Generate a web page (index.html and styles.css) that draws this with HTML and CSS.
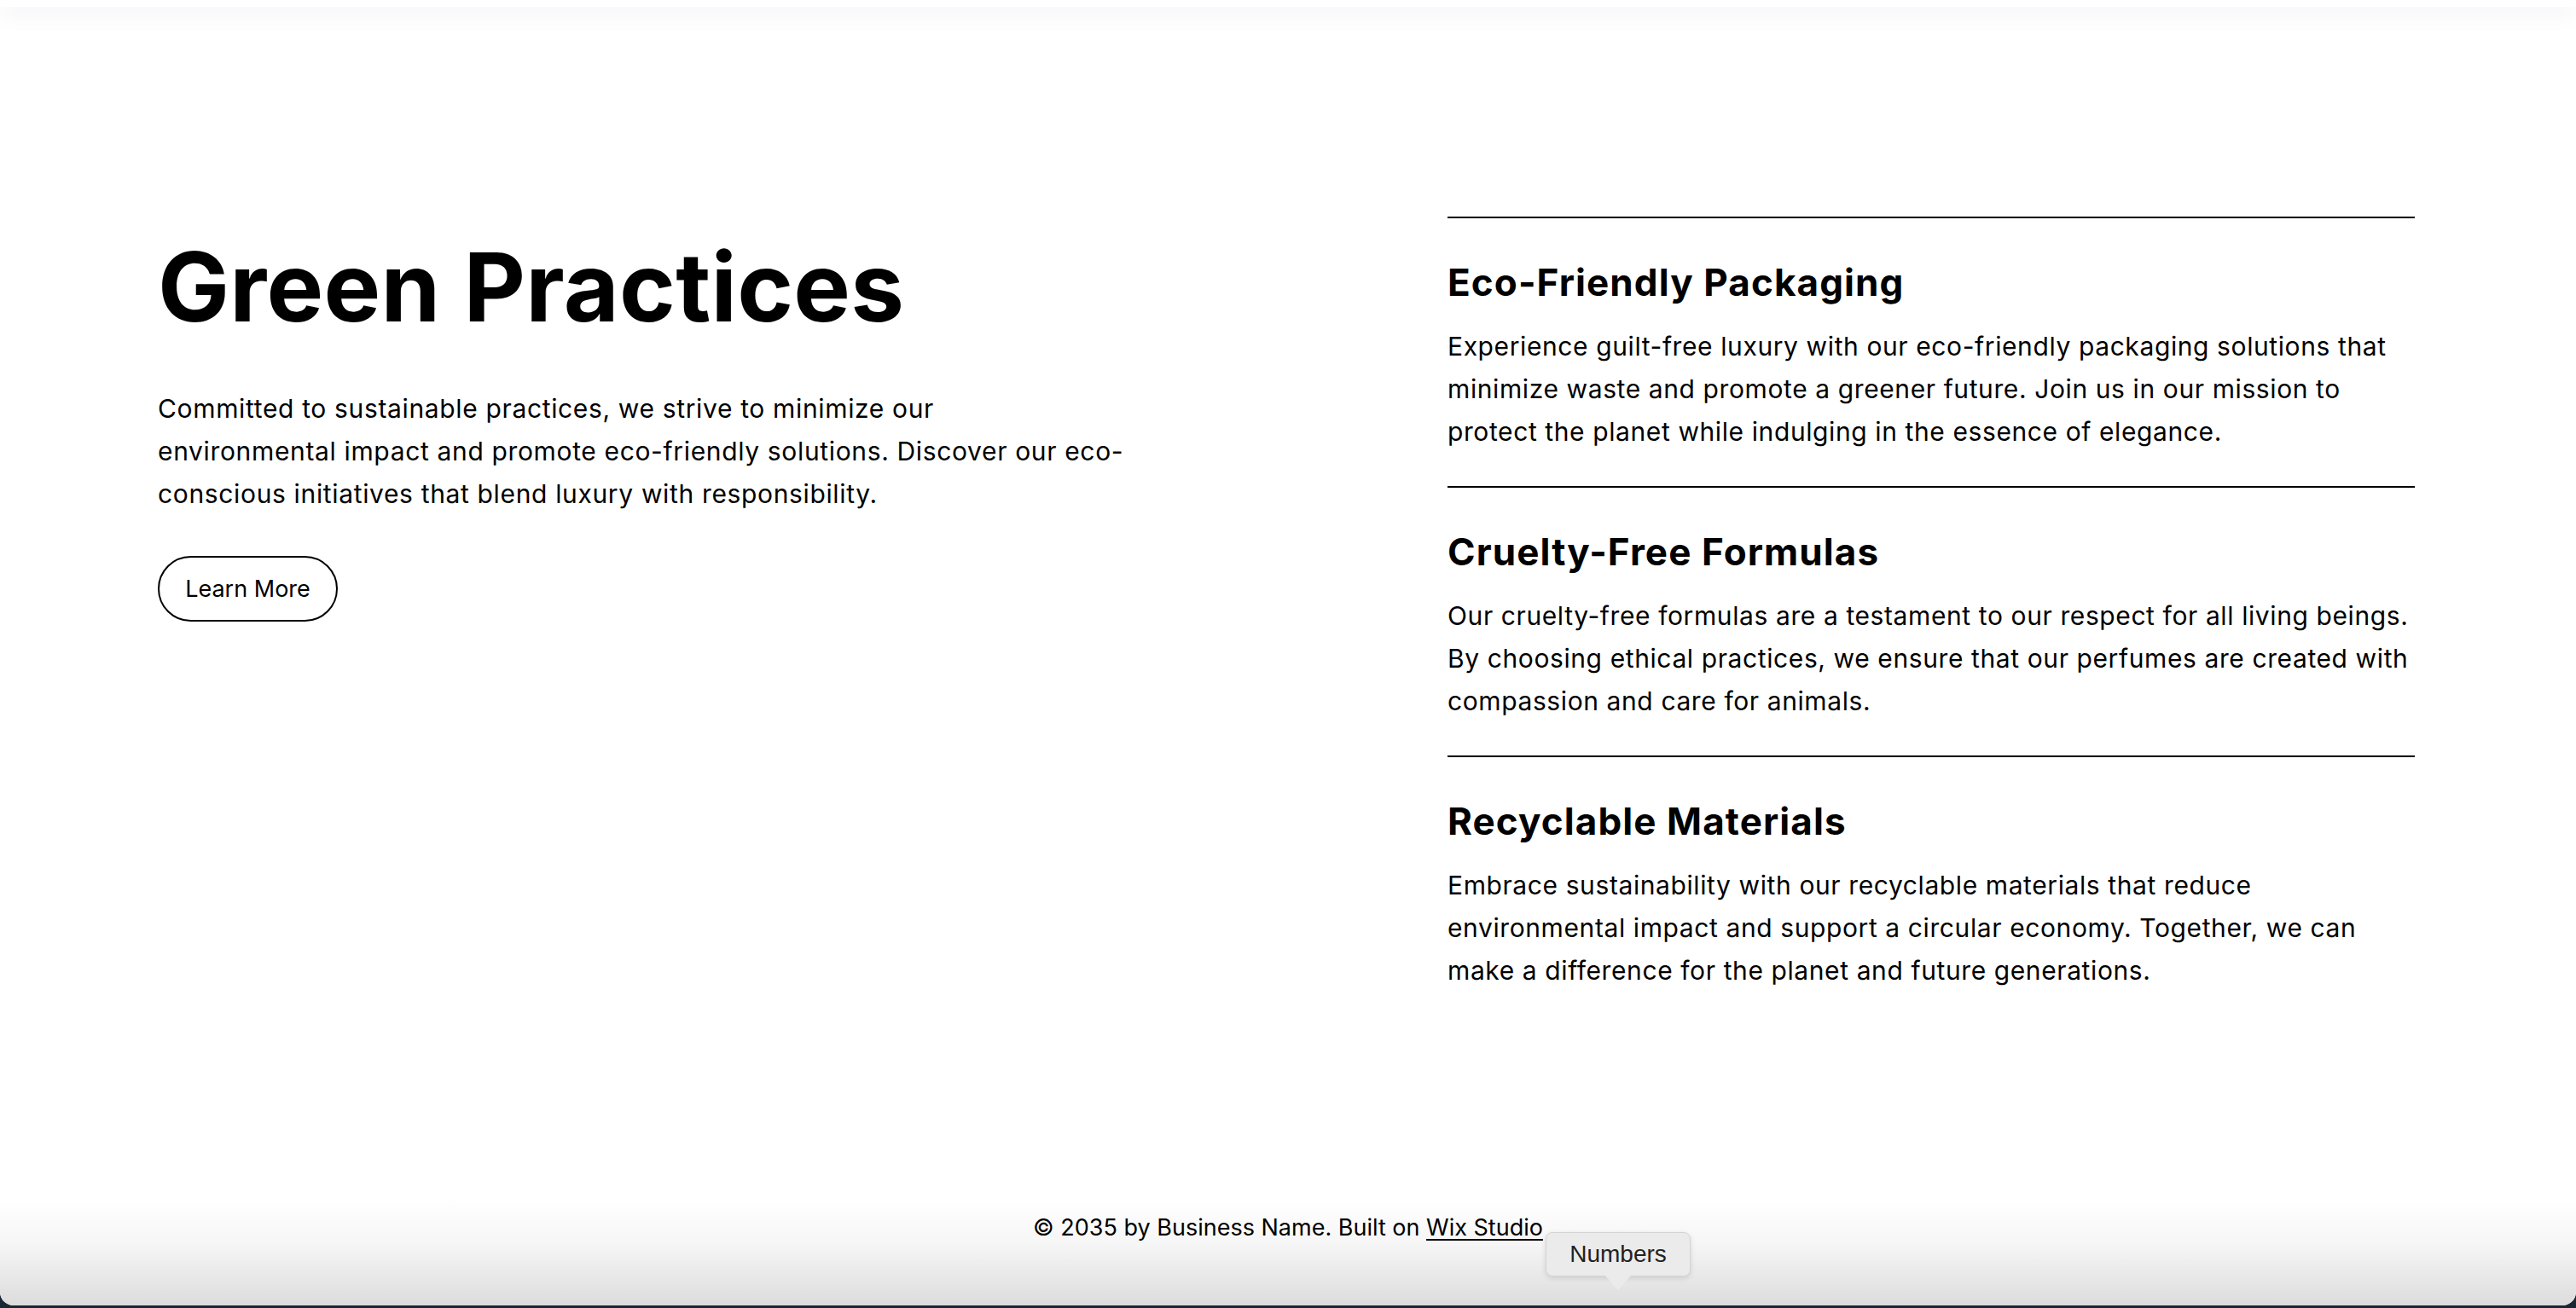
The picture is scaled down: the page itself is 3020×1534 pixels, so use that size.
FILE: index.html
```html
<!DOCTYPE html>
<html lang="en">
<head>
<meta charset="utf-8">
<title>Green Practices</title>
<link rel="stylesheet" href="styles.css">
</head>
<body>
<div class="window">
  <header class="site-header"></header>
  <main class="practices">
    <section class="intro">
      <h1 class="intro-title">Green Practices</h1>
      <p class="intro-text">Committed to sustainable practices, we strive to minimize our<br>environmental impact and promote eco-friendly solutions. Discover our eco-conscious initiatives that blend luxury with responsibility.</p>
      <a class="btn-outline" href="#">Learn More</a>
    </section>
    <section class="features">
      <article class="feature">
        <h2 class="feature-title">Eco-Friendly Packaging</h2>
        <p class="feature-text">Experience guilt-free luxury with our eco-friendly packaging solutions that minimize waste and promote a greener future. Join us in our mission to protect the planet while indulging in the essence of elegance.</p>
      </article>
      <article class="feature">
        <h2 class="feature-title">Cruelty-Free Formulas</h2>
        <p class="feature-text">Our cruelty-free formulas are a testament to our respect for all living beings. By choosing ethical practices, we ensure that our perfumes are created with compassion and care for animals.</p>
      </article>
      <article class="feature">
        <h2 class="feature-title">Recyclable Materials</h2>
        <p class="feature-text">Embrace sustainability with our recyclable materials that reduce environmental impact and support a circular economy. Together, we can make a difference for the planet and future generations.</p>
      </article>
    </section>
  </main>
  <footer class="site-footer">
    <p class="copyright">© 2035 by Business Name. Built on <a href="#" class="footer-link">Wix Studio</a></p>
  </footer>
  <div class="tooltip">Numbers</div>
</div>
</body>
</html>
```

FILE: styles.css
```css
* {
  box-sizing: border-box;
}

html, body {
  margin: 0;
  padding: 0;
}

body {
  width: 3020px;
  height: 1534px;
  background: #1a2634;
  overflow: hidden;
  font-family: Inter, "Noto Sans", "Liberation Sans", sans-serif;
  color: #000;
}

.window {
  position: relative;
  width: 3020px;
  height: 1531px;
  background: #fff;
  border-radius: 0 0 16px 16px;
  overflow: hidden;
  display: flex;
  flex-direction: column;
}

.site-header {
  height: 8px;
  flex: none;
  background: #fff;
  position: relative;
  z-index: 1;
  box-shadow: 0 6px 26px rgba(40, 40, 90, 0.1);
}

.practices {
  display: grid;
  grid-template-columns: 1150px 1134px;
  justify-content: space-between;
  padding: 0 189px 0 185px;
  flex: none;
}

.intro {
  padding-top: 267px;
  display: flex;
  flex-direction: column;
  align-items: flex-start;
}

.intro-title {
  margin: 0;
  font-size: 112px;
  line-height: 123px;
  font-weight: 700;
  letter-spacing: 0.3px;
}

.intro-text {
  margin: 56px 0 0;
  width: 1150px;
  font-size: 30px;
  line-height: 50px;
  font-weight: 400;
  letter-spacing: 0.65px;
}

.btn-outline {
  margin-top: 48px;
  display: inline-flex;
  align-items: center;
  justify-content: center;
  width: 211px;
  height: 77px;
  border: 2px solid #000;
  border-radius: 40px;
  font-size: 27px;
  color: #000;
  text-decoration: none;
}

.features {
  padding-top: 246px;
}

.feature {
  border-top: 2px solid #000;
  padding: 48px 0 39px;
}

.feature-title {
  margin: 0;
  font-size: 44px;
  line-height: 55px;
  font-weight: 700;
  letter-spacing: 1.1px;
}

.feature-text {
  margin: 22px 0 0;
  max-width: 1130px;
  font-size: 30px;
  line-height: 50px;
  font-weight: 400;
  letter-spacing: 0.6px;
}

.site-footer {
  flex: 1;
  display: flex;
  justify-content: center;
  align-items: flex-start;
  padding-top: 218px;
  background: linear-gradient(to bottom, #fff 0%, #fff 62%, #f6f6f6 78%, #dcdcdc 100%);
}

.copyright {
  margin: 0;
  font-size: 27px;
  line-height: 40px;
}

.footer-link {
  color: #000;
  text-decoration: underline;
  text-underline-offset: 4px;
  text-decoration-thickness: 2px;
}

.tooltip {
  position: absolute;
  left: 1812px;
  top: 1445px;
  width: 170px;
  height: 52px;
  display: flex;
  align-items: center;
  justify-content: center;
  background: #ebebeb;
  border: 1px solid #d4d4d4;
  border-radius: 8px;
  box-shadow: 0 2px 6px rgba(0, 0, 0, 0.12);
  font-family: "Liberation Sans", Arial, sans-serif;
  font-size: 28px;
  color: #222;
}

.tooltip::after {
  content: "";
  position: absolute;
  left: 50%;
  bottom: -17px;
  margin-left: -15px;
  border-left: 15px solid transparent;
  border-right: 15px solid transparent;
  border-top: 17px solid #ebebeb;
}
```
